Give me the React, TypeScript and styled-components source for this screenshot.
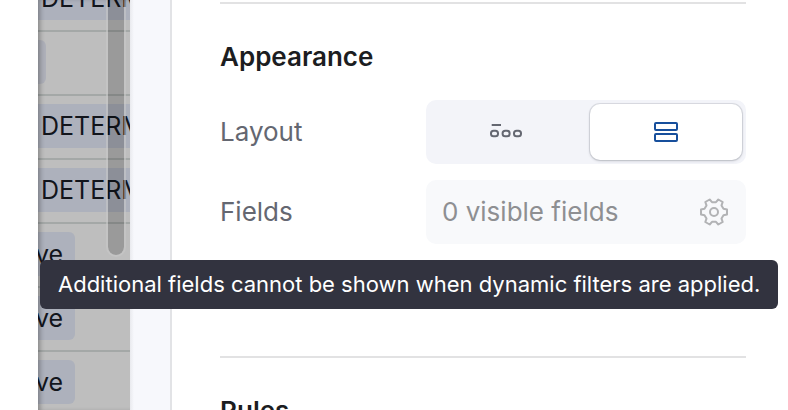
import React from "react";
import styled, { createGlobalStyle } from "styled-components";

const GlobalStyle = createGlobalStyle`
  *, *::before, *::after { box-sizing: border-box; }
  body {
    margin: 0;
    background: #fff;
    font-family: Inter, "Liberation Sans", sans-serif;
    font-size: 26px;
    line-height: 32px;
  }
  h2 { margin: 0; font-size: inherit; }
  button { font: inherit; border: 0; margin: 0; }
`;

const Page = styled.div`
  position: relative;
  display: flex;
  height: 100vh;
  padding-left: 38px;
  overflow: hidden;
`;

const RecordList = styled.div`
  position: relative;
  flex: 0 0 92px;
  overflow: hidden;
  background: #bebebe;
  color: #12151c;
  font-size: 25px;

  &::after {
    content: "";
    position: absolute;
    inset: 0;
    box-shadow: inset 4px 0 5px -2px rgba(0, 0, 0, 0.3);
  }
`;

const Records = styled.div`
  margin-top: -32px;
`;

const RecordRow = styled.div`
  height: 64px;
  padding-top: 8px;
  border-bottom: 2px solid #a4a8a7;
`;

type Kind = "long" | "short" | "empty";

const tagWidth: Record<Kind, string> = { long: "160px", short: "40px", empty: "11px" };

const Tag = styled.span<{ $kind: Kind }>`
  display: block;
  width: ${({ $kind }) => tagWidth[$kind]};
  height: 44px;
  margin-left: ${({ $kind }) => ($kind === "long" ? "0" : "-3px")};
  padding-left: ${({ $kind }) => ($kind === "long" ? "3px" : "0")};
  border-radius: 0 6px 6px 0;
  background: ${({ $kind }) => ($kind === "empty" ? "#aeb0b9" : "#adb1bc")};
  line-height: 44px;
  white-space: nowrap;
`;

const ScrollThumb = styled.div`
  position: absolute;
  top: -20px;
  right: 4px;
  width: 20px;
  height: 277px;
  border: 2px solid rgba(200, 200, 200, 0.55);
  border-radius: 10px;
  background: rgba(0, 0, 0, 0.19);
  background-clip: padding-box;
`;

const Gutter = styled.div`
  flex: 0 0 42px;
  border-right: 2px solid #e2e3e6;
  background: linear-gradient(to right, #e9eaee, #f7f8fc 4px);
`;

const Panel = styled.main`
  flex: 1;
  min-width: 0;
  padding: 2px 42px 0 48px;
  color: #1c1d21;
`;

const Section = styled.section`
  display: grid;
  gap: 16px;
  border-top: 2px solid #e2e2e3;
  padding: 37px 0 112px;
`;

const SectionTitle = styled.h2`
  margin-bottom: 11px;
  font-weight: 600;
`;

const Setting = styled.div`
  display: grid;
  grid-template-columns: 206px minmax(0, 1fr);
  align-items: center;
  color: #646771;
`;

const Segments = styled.div`
  display: grid;
  grid-template-columns: 1fr 1fr;
  gap: 8px;
  height: 64px;
  padding: 4px;
  border-radius: 10px;
  background: #f3f4f9;
`;

const Segment = styled.button<{ $active?: boolean }>`
  display: flex;
  align-items: center;
  justify-content: center;
  padding: 0;
  border-radius: 10px;
  background: ${({ $active }) => ($active ? "#fff" : "transparent")};
  color: ${({ $active }) => ($active ? "#174f9c" : "#646771")};
  box-shadow: ${({ $active }) =>
    $active ? "0 0 0 1px rgba(30, 35, 50, 0.1), 0 1px 3px rgba(30, 35, 50, 0.2)" : "none"};
`;

const FieldsButton = styled.button`
  display: flex;
  align-items: center;
  justify-content: space-between;
  height: 64px;
  padding: 0 16px;
  border-radius: 10px;
  background: #f8f9fb;
  color: #8e8f92;
`;

const Tooltip = styled.div`
  position: absolute;
  top: 260px;
  left: 40px;
  padding: 8px 18px 9px;
  border-radius: 6px;
  background: #32333f;
  color: #fff;
  font-size: 22px;
  white-space: nowrap;
`;

const InlineIcon = () => (
  <svg width="34" height="24" viewBox="0 0 34 24" fill="none" stroke="currentColor" strokeWidth="2" aria-hidden="true">
    <path d="M2.7 5H12" />
    <rect x="2" y="10.7" width="7" height="5.6" rx="2.6" />
    <rect x="13.6" y="10.7" width="7" height="5.6" rx="2.6" />
    <rect x="25" y="10.7" width="7" height="5.6" rx="2.6" />
  </svg>
);

const StackedIcon = () => (
  <svg width="28" height="24" viewBox="0 0 28 24" fill="none" stroke="currentColor" strokeWidth="2" aria-hidden="true">
    <rect x="3" y="3" width="22" height="7" rx="1" />
    <rect x="3" y="14" width="22" height="7" rx="1" />
  </svg>
);

const GearIcon = () => (
  <svg width="32" height="32" viewBox="0 0 32 32" fill="none" stroke="#b2b3b5" strokeWidth="2" strokeLinejoin="round" aria-hidden="true">
    <path d="M6.5 12.8 3 13.5v5l3.5.7 2 3.4L7.3 26l4.4 2.5 2.3-2.7h4l2.3 2.7 4.4-2.5-1.2-3.4 2-3.4 3.5-.7v-5l-3.5-.7-2-3.4L24.7 6l-4.4-2.5L18 6.2h-4l-2.3-2.7L7.3 6l1.2 3.4Z" />
    <circle cx="16" cy="16" r="4" />
  </svg>
);

const records: { kind: Kind; text: string }[] = [
  { kind: "long", text: "DETERMINED" },
  { kind: "empty", text: "" },
  { kind: "long", text: "DETERMINED" },
  { kind: "long", text: "DETERMINED" },
  { kind: "short", text: "ve" },
  { kind: "short", text: "ve" },
  { kind: "short", text: "ve" },
];

export default function App() {
  return (
    <Page>
      <GlobalStyle />
      <RecordList>
        <Records>
          {records.map((record, i) => (
            <RecordRow key={i}>
              <Tag $kind={record.kind}>{record.text}</Tag>
            </RecordRow>
          ))}
        </Records>
        <ScrollThumb />
      </RecordList>
      <Gutter />
      <Panel>
        <Section>
          <SectionTitle>Appearance</SectionTitle>
          <Setting>
            <span id="layout-label">Layout</span>
            <Segments role="group" aria-labelledby="layout-label">
              <Segment type="button" aria-label="Inline" aria-pressed="false"><InlineIcon /></Segment>
              <Segment type="button" aria-label="Stacked" aria-pressed="true" $active><StackedIcon /></Segment>
            </Segments>
          </Setting>
          <Setting>
            <label htmlFor="fields">Fields</label>
            <FieldsButton id="fields" type="button" disabled aria-describedby="fields-tip">
              <span>0 visible fields</span>
              <GearIcon />
            </FieldsButton>
          </Setting>
        </Section>
        <Section>
          <SectionTitle>Rules</SectionTitle>
        </Section>
      </Panel>
      <Tooltip id="fields-tip" role="tooltip">
        Additional fields cannot be shown when dynamic filters are applied.
      </Tooltip>
    </Page>
  );
}
